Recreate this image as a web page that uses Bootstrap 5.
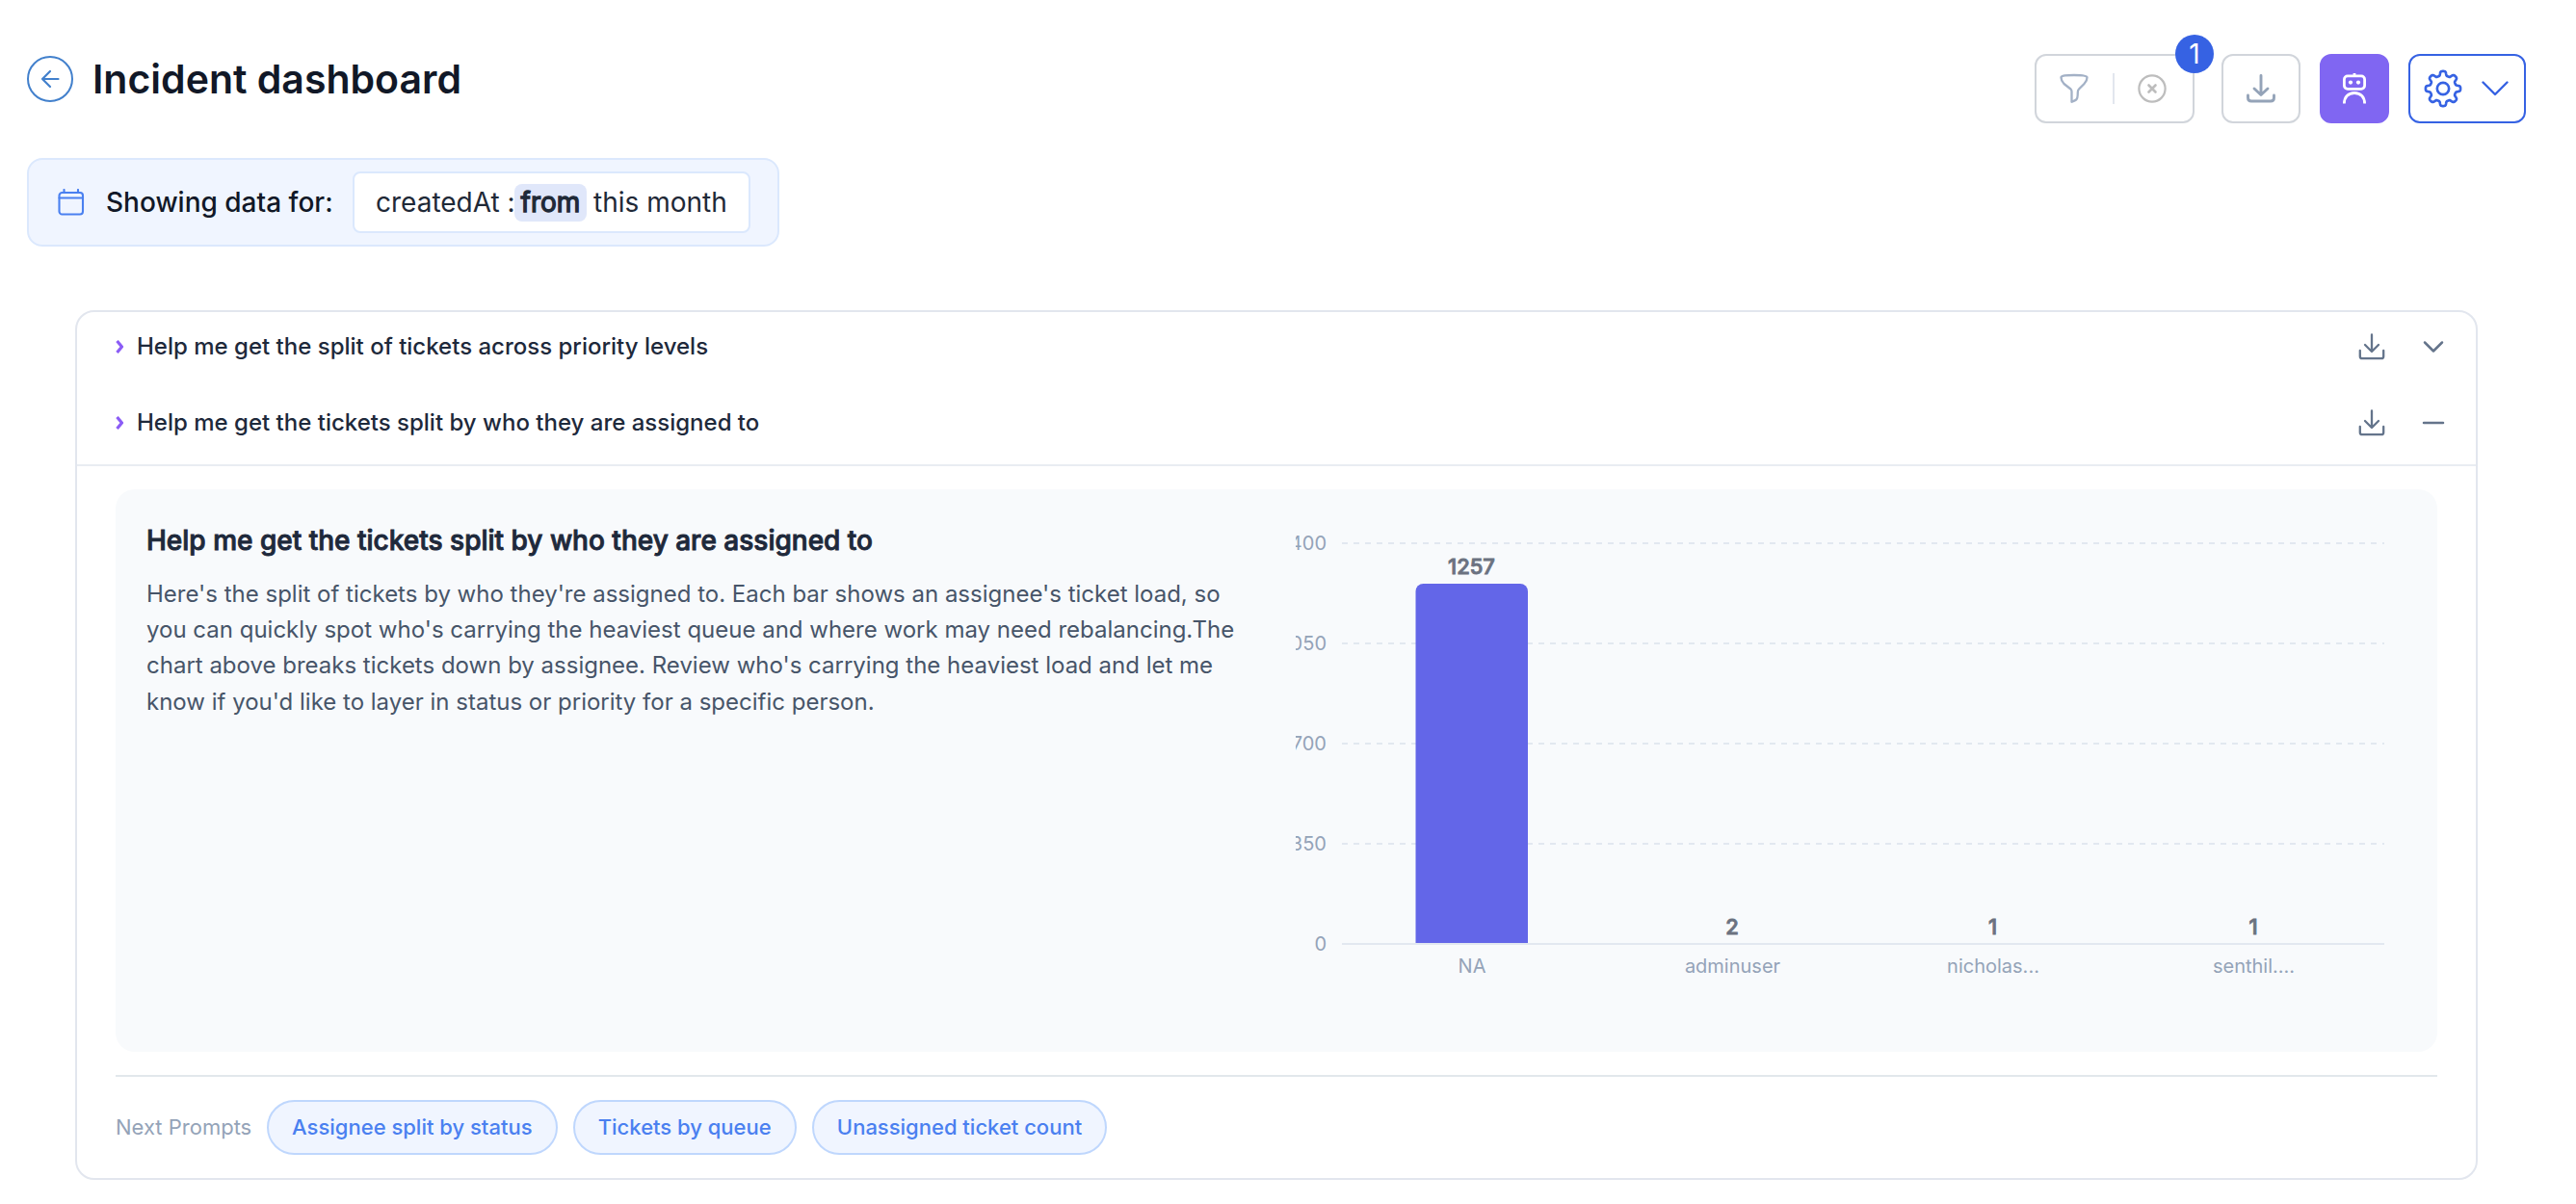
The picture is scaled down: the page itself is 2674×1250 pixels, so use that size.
<!DOCTYPE html>
<html lang="en">
<head>
<meta charset="utf-8">
<meta name="viewport" content="width=device-width, initial-scale=1">
<title>Incident dashboard</title>
<link href="https://cdn.jsdelivr.net/npm/bootstrap@5.3.0/dist/css/bootstrap.min.css" rel="stylesheet">
<style>
body{font-family:Inter,"Liberation Sans",sans-serif;background:#fff;color:#111827;height:1250px;overflow:hidden}
svg{display:block;flex:none}
.stroke-icon{fill:none;stroke:currentColor;stroke-linecap:round;stroke-linejoin:round}
.butt-caps{stroke-linecap:butt}
.page-head{padding:56px 52px 0 28px}
.back-btn{width:48px;height:48px;border:2px solid #4280cc;color:#4280cc;margin-top:2px}
.page-title{font-size:41px;font-weight:600;line-height:48px;margin:2px 0 0 20px;color:#111827;white-space:nowrap}
.tools{height:72px}
.tool{height:72px;border:2px solid #d1d5db;border-radius:12px;background:#fff;padding:0}
.tool-filter{width:166px;margin-right:28px;padding-left:24px;gap:24.5px}
.tool-save{width:82px;margin-right:20px;color:#94a3b8}
.tool-bot{width:72px;margin-right:20px;background:#8066f2;border-color:#8066f2;color:#fff}
.tool-gear{width:122px;border-color:#3662e3;color:#3662e3;padding-left:14px;gap:20px}
.ic-funnel{color:#a3b1c6}
.ic-clear{color:#bdbdbd}
.rule-v{width:2px;height:32px;background:#e2e6ee}
.count-dot{position:absolute;right:-22px;top:-22px;width:40px;height:40px;border-radius:50%;background:#3662e3;color:#fff;font-size:28px;line-height:40px;text-align:center}
.scope-bar{margin:36px 0 0 28px;width:781px;height:92px;background:#f0f5ff;border:2px solid #dbe8fd;border-radius:16px;padding-left:30px;font-size:28px}
.ic-cal{color:#4a80f0}
.scope-label{font-weight:500;margin-left:22px;width:256px;white-space:nowrap}
.scope-value{width:413px;height:64px;border:2px solid #dbe8fd;border-radius:8px;padding-left:22px;color:#1f2937;white-space:nowrap}
.scope-field{width:144px}
.scope-op{background:#e0e7fa;border-radius:8px;height:39px;width:75px;font-weight:400;-webkit-text-stroke:1.3px currentColor;margin-right:7px}
.panel{margin:66px 102px 0 78px;height:903px;border:2px solid #e2e6ee;border-radius:20px}
.prompt-row{padding:0 31px 0 40px;font-size:24px;font-weight:500;color:#1e293b}
.prompt-row .caret{color:#8b5cf6;width:22px}
.prompt-tools{color:#64748b;gap:37px}
.first-row{height:72px}
.second-row{height:88px;border-bottom:2px solid #e9edf2}
.answer{margin:24px 40px 0;height:584px;background:#f8fafc;border-radius:20px;padding:32px 32px 0}
.answer-text{width:1193px}
.answer-title{font-size:28px;font-weight:500;-webkit-text-stroke:.9px currentColor;line-height:40px;margin:1px 0 17px;color:#1e293b;white-space:nowrap}
.answer-body{font-size:24px;line-height:37.2px;color:#475569;margin:0;white-space:nowrap}
.chart text{font-family:Inter,"Liberation Sans",sans-serif;font-size:20px;fill:#94a3b8}
.chart .bar-value{font-size:22px;font-weight:500;fill:#6b7280;stroke:#6b7280;stroke-width:.9px}
.next{margin:24px 40px 0;border-top:2px solid #e2e8ec;padding-top:24px;font-size:22px;color:#94a3b8}
.next-label{width:157px}
.pill{height:57px;border:2px solid #bfd7fd;border-radius:29px;background:#f0f5ff;color:#4a80f0;font-weight:500;font-size:22px;padding:0 24.1px;white-space:nowrap}
</style>
</head>
<body>
<header class="page-head d-flex justify-content-between align-items-start">
  <div class="d-flex align-items-start">
    <button class="back-btn rounded-circle bg-transparent d-flex align-items-center justify-content-center p-0" aria-label="Back">
      <svg class="stroke-icon" width="20" height="20" viewBox="0 0 20 20" stroke-width="2.2"><path d="M18.500 10H2M10 2L2 10l8 8"/></svg>
    </button>
    <h1 class="page-title">Incident dashboard</h1>
  </div>
  <div class="tools d-flex">
    <div class="tool tool-filter position-relative d-flex align-items-center">
      <svg class="stroke-icon ic-funnel" width="30" height="32" viewBox="0 0 30 32" stroke-width="2.300"><path d="M1.500 4.500C1.500 2.500 7 2 15 2s13.500.5 13.500 2.500c0 3-1 4.500-3 6.500l-5.500 5.500c-1 1-1.200 2-1.200 3.500 0 3-.3 6.500-1.600 7.500-1.600 1.200-3.500 1.700-4.700 2.200V19c0-1.200-.3-1.800-1-2.500L4.500 11C2.500 9 1.500 7.500 1.500 4.500z"/></svg>
      <span class="rule-v"></span>
      <svg class="stroke-icon ic-clear" width="30" height="30" viewBox="0 0 30 30" stroke-width="2.200"><circle cx="15" cy="15" r="13.600"/><path stroke-width="2.600" d="M11.500 11.500l7 7m0-7l-7 7"/></svg>
      <span class="count-dot">1</span>
    </div>
    <button class="tool tool-save d-flex align-items-center justify-content-center" aria-label="Download">
      <svg class="stroke-icon" width="30" height="30" viewBox="0 0 30 30" stroke-width="2.900"><path d="M15 1.500v20M8 15l7 6.500 7-6.500M1.500 22v2.500c0 2.500 1 3.500 3.500 3.500h20c2.500 0 3.500-1 3.500-3.500V22"/></svg>
    </button>
    <button class="tool tool-bot d-flex align-items-center justify-content-center" aria-label="Assistant">
      <svg class="stroke-icon butt-caps" width="26" height="34" viewBox="0 0 26 34" stroke-width="2.800"><rect x="2.400" y="3.900" width="21.200" height="13.400" rx="3.500"/><path d="M13 1v3M2.400 32.500c0-6.500 4-11 10.600-11s10.600 4.500 10.600 11"/><circle cx="9" cy="10.600" r="2.100" fill="currentColor" stroke="none"/><circle cx="17" cy="10.600" r="2.100" fill="currentColor" stroke="none"/></svg>
    </button>
    <button class="tool tool-gear d-flex align-items-center" aria-label="Settings">
      <svg class="stroke-icon" width="40" height="40" viewBox="0 0 24 24" stroke-width="1.600"><circle cx="12" cy="12" r="3.700"/><path id="gear" d=""/></svg>
      <svg class="stroke-icon" width="28" height="16" viewBox="0 0 28 16" stroke-width="2.400"><path d="M1.500 1.500L14 14 26.500 1.500"/></svg>
    </button>
  </div>
</header>

<section class="scope-bar d-flex align-items-center">
  <svg class="stroke-icon ic-cal" width="28" height="28" viewBox="0 0 28 28" stroke-width="2.100"><rect x="1.500" y="4" width="24.500" height="22.500" rx="3"/><path d="M1.500 9.500h24.500M6.500 1v3M21 1v3"/></svg>
  <span class="scope-label">Showing data for:</span>
  <div class="scope-value bg-white d-flex align-items-center">
    <span class="scope-field">createdAt :</span><span class="scope-op d-flex align-items-center justify-content-center">from</span><span>this month</span>
  </div>
</section>

<main class="panel">
  <div class="prompt-row first-row d-flex align-items-center">
    <span class="caret"><svg class="stroke-icon butt-caps" width="10" height="14" viewBox="0 0 10 14" stroke-width="3.200"><path d="M1.500 1l5 6-5 6"/></svg></span>
    <span class="me-auto">Help me get the split of tickets across priority levels</span>
    <div class="prompt-tools d-flex align-items-center">
      <svg class="stroke-icon" width="28" height="28" viewBox="0 0 28 28" stroke-width="2.300"><path d="M14 1.500v17M7 12l7 7 7-7M1.800 18v6c0 1.500.7 2.200 2.200 2.200h20c1.500 0 2.200-.7 2.200-2.200v-6"/></svg>
      <svg class="stroke-icon" width="26" height="26" viewBox="0 0 26 26" stroke-width="2.500"><path d="M4 8.500l9 9 9-9"/></svg>
    </div>
  </div>
  <div class="prompt-row second-row d-flex align-items-center">
    <span class="caret"><svg class="stroke-icon butt-caps" width="10" height="14" viewBox="0 0 10 14" stroke-width="3.200"><path d="M1.500 1l5 6-5 6"/></svg></span>
    <span class="me-auto">Help me get the tickets split by who they are assigned to</span>
    <div class="prompt-tools d-flex align-items-center">
      <svg class="stroke-icon" width="28" height="28" viewBox="0 0 28 28" stroke-width="2.300"><path d="M14 1.500v17M7 12l7 7 7-7M1.800 18v6c0 1.500.7 2.200 2.200 2.200h20c1.500 0 2.200-.7 2.200-2.200v-6"/></svg>
      <svg class="stroke-icon" width="26" height="26" viewBox="0 0 26 26" stroke-width="2.500"><path d="M3 13h20"/></svg>
    </div>
  </div>

  <section class="answer d-flex">
    <div class="answer-text">
      <h2 class="answer-title">Help me get the tickets split by who they are assigned to</h2>
      <p class="answer-body">Here's the split of tickets by who they're assigned to. Each bar shows an assignee's ticket load, so<br>you can quickly spot who's carrying the heaviest queue and where work may need rebalancing.The<br>chart above breaks tickets down by assignee. Review who's carrying the heaviest load and let me<br>know if you'd like to layer in status or priority for a specific person.</p>
    </div>
    <svg class="chart" width="1153" height="520" viewBox="1345 540 1153 520">
      <g stroke="#e2e8f0" stroke-width="2" stroke-dasharray="6 6">
        <path d="M1393 564H2475M1393 668H2475M1393 772H2475M1393 876H2475"/>
      </g>
      <path d="M1393 980H2475" stroke="#e2e8f0" stroke-width="2"/>
      <path d="M1469.500 979V614a8 8 0 0 1 8-8h100.500a8 8 0 0 1 8 8v365z" fill="#6366e8"/>
      <g text-anchor="end">
        <text x="1377" y="571">1400</text><text x="1377" y="675">1050</text><text x="1377" y="779">700</text><text x="1377" y="883">350</text><text x="1377" y="987">0</text>
      </g>
      <g text-anchor="middle">
        <text class="bar-value" x="1527.500" y="596">1257</text><text class="bar-value" x="1798" y="969.500">2</text><text class="bar-value" x="2068.500" y="969.500">1</text><text class="bar-value" x="2339" y="969.500">1</text>
        <text x="1528" y="1010">NA</text><text x="1798.500" y="1010">adminuser</text><text x="2069" y="1010">nicholas...</text><text x="2339.500" y="1010">senthil....</text>
      </g>
    </svg>
  </section>

  <footer class="next d-flex align-items-center">
    <span class="next-label">Next Prompts</span>
    <div class="d-flex gap-3">
      <button class="pill">Assignee split by status</button>
      <button class="pill">Tickets by queue</button>
      <button class="pill">Unassigned ticket count</button>
    </div>
  </footer>
</main>
<script>
// Eight-lobed cog outline traced in polar coordinates.
(function(){
  var d='',n=240;
  for(var i=0;i<n;i++){
    var a=i/n*2*Math.PI,s=Math.tanh(2.2*Math.cos(8*a))/Math.tanh(2.2),r=9.5+1.35*s;
    d+=(i?'L':'M')+(12+r*Math.sin(a)).toFixed(2)+' '+(12-r*Math.cos(a)).toFixed(2);
  }
  document.getElementById('gear').setAttribute('d',d+'Z');
})();
</script>
<script src="https://cdn.jsdelivr.net/npm/bootstrap@5.3.0/dist/js/bootstrap.bundle.min.js"></script>
</body>
</html>
